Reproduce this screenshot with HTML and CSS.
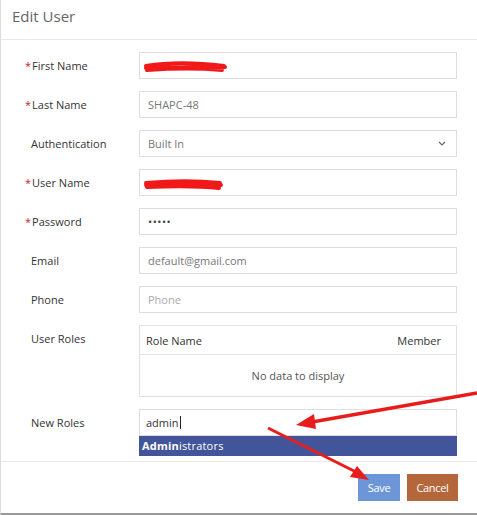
FILE: index.html
```html
<!DOCTYPE html>
<html>
<head>
<meta charset="utf-8">
<title>Edit User</title>
<link rel="stylesheet" href="styles.css">
</head>
<body>
<div class="modal">
  <div class="modal-header">Edit User</div>

  <div class="modal-body">
    <div class="row">
      <label class="lbl"><span class="req">*</span>First Name</label>
      <div class="field"><span class="val"></span></div>
    </div>
    <div class="row">
      <label class="lbl"><span class="req">*</span>Last Name</label>
      <div class="field"><span class="val">SHAPC-48</span></div>
    </div>
    <div class="row">
      <label class="lbl pad">Authentication</label>
      <div class="field select"><span class="val">Built In</span>
        <svg class="chev" width="8" height="5" viewBox="0 0 8 5"><path d="M1 1l3 3 3-3" fill="none" stroke="#666" stroke-width="1.2"/></svg>
      </div>
    </div>
    <div class="row">
      <label class="lbl"><span class="req">*</span>User Name</label>
      <div class="field"><span class="val"></span></div>
    </div>
    <div class="row">
      <label class="lbl"><span class="req">*</span>Password</label>
      <div class="field"><span class="val dots">&#8226;&#8226;&#8226;&#8226;&#8226;</span></div>
    </div>
    <div class="row">
      <label class="lbl pad">Email</label>
      <div class="field"><span class="val">default@gmail.com</span></div>
    </div>
    <div class="row">
      <label class="lbl pad">Phone</label>
      <div class="field"><span class="val hint">Phone</span></div>
    </div>
    <div class="row roles">
      <label class="lbl pad">User Roles</label>
      <div class="grid">
        <div class="grid-head"><span>Role Name</span><span>Member</span></div>
        <div class="grid-empty">No data to display</div>
      </div>
    </div>
    <div class="row newroles">
      <label class="lbl pad">New Roles</label>
      <div class="combo">
        <div class="field"><span class="val typed">admin<span class="caret"></span></span></div>
        <div class="suggest"><b>Admin</b>istrators</div>
      </div>
    </div>
  </div>

  <div class="modal-footer">
    <button class="btn save">Save</button>
    <button class="btn cancel">Cancel</button>
  </div>
</div>

<!-- red marks drawn over the screenshot -->
<svg class="marks" width="477" height="515" viewBox="0 0 477 515">
  <path d="M146 66 C170 62 200 63 224 66 M147 70 C175 68 200 68 222 70 M146 68 L225 67" stroke="#f01818" stroke-width="4" fill="none" stroke-linecap="round"/>
  <path d="M146 183 C170 181 200 181 220 183 M147 187 C175 186 200 186 219 188 M146 185 L221 185" stroke="#f01818" stroke-width="4" fill="none" stroke-linecap="round"/>
  <path d="M477 393 L312 422" stroke="#e81c1c" stroke-width="3.5" fill="none"/>
  <path d="M296 425 L314 414 L316 429 Z" fill="#e81c1c"/>
  <path d="M268 428 L356 472" stroke="#e81c1c" stroke-width="3" fill="none"/>
  <path d="M369 480 L350 477 L357 466 Z" fill="#e81c1c"/>
</svg>
</body>
</html>
```

FILE: styles.css
```css
body {
    margin: 0;
    background: #fff;
    font-family: "Open Sans", "Liberation Sans", sans-serif;
}

.modal {
    width: 476px;
    height: 513px;
    border-left: 1px solid #dcdcdc;
    border-bottom: 2px solid #9a9a9a;
    background: #fff;
    display: flex;
    flex-direction: column;
}

.modal-header {
    height: 39px;
    border-bottom: 1px solid #e8e8e8;
    padding-left: 11px;
    font-size: 15px;
    line-height: 33px;
    color: #666;
}

.modal-body {
    padding: 12px 19px 0 24px;
}

.row {
    display: grid;
    grid-template-columns: 114px 318px;
    margin-bottom: 12px;
}

.lbl {
    font-size: 11px;
    color: #333;
    line-height: 27px;
}
.lbl.pad {
    padding-left: 6px;
}
.req {
    color: #c81e1e;
    margin-right: 1px;
}

.field {
    height: 25px;
    border: 1px solid #dedede;
    display: flex;
    align-items: center;
    padding: 0 8px;
    font-size: 11px;
    color: #777;
}
.field .dots {
    color: #444;
    letter-spacing: 0.5px;
}
.field .hint {
    color: #aaa;
}
.field.select {
    justify-content: space-between;
}
.chev {
    margin-right: 2px;
}

.roles {
    margin-top: 2px;
}
.grid {
    border: 1px solid #e2e2e2;
    height: 70px;
}
.grid-head {
    height: 28px;
    border-bottom: 1px solid #e2e2e2;
    display: flex;
    justify-content: space-between;
    align-items: center;
    padding: 0 15px 0 6px;
    font-size: 11px;
    color: #333;
}
.grid-empty {
    height: 41px;
    display: flex;
    align-items: center;
    justify-content: center;
    font-size: 11px;
    color: #555;
}

.newroles {
    margin-bottom: 5px;
}
.newroles .field {
    padding: 0 6px;
}
.typed {
    color: #333;
    display: flex;
    align-items: center;
}
.caret {
    display: inline-block;
    width: 1px;
    height: 13px;
    background: #222;
    margin-left: 1px;
}
.suggest {
    height: 20px;
    background: #42559a;
    color: #fff;
    font-size: 11px;
    line-height: 20px;
    padding-left: 3px;
    letter-spacing: 0.2px;
}

.modal-footer {
    border-top: 1px solid #e8e8e8;
    display: flex;
    justify-content: flex-end;
    gap: 7px;
    padding: 12px 19px 0 0;
}

.btn {
    height: 27px;
    border: 0;
    color: #fff;
    font-family: "Open Sans", "Liberation Sans", sans-serif;
    font-size: 11px;
    letter-spacing: -0.3px;
    padding: 0;
}
.btn.save {
    width: 42px;
    background: #6d96d8;
}
.btn.cancel {
    width: 51px;
    background: #b5673c;
}

.marks {
    position: absolute;
    left: 0;
    top: 0;
    pointer-events: none;
}
```
